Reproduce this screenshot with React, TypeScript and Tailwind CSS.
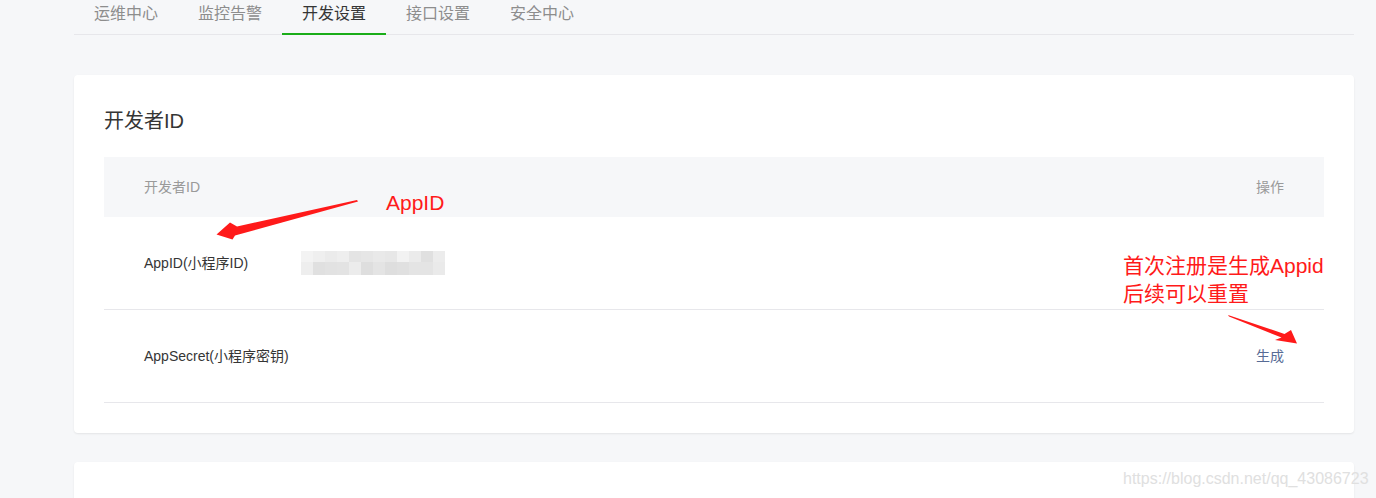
import React from "react";

const FONT = { fontFamily: '"Liberation Sans", "Noto Sans CJK SC", sans-serif' };

const tabs = ["运维中心", "监控告警", "开发设置", "接口设置", "安全中心"];

const blurTop = ["#f3f3f3", "#efefef", "#ebebeb", "#eeeeee", "#e4e4e4", "#e6e6e6", "#e9e9e9", "#e7e7e7", "#f2f2f2", "#ebebeb", "#e0e0e0", "#ececec"];
const blurBottom = ["#eeeeee", "#e0e0e0", "#e2e2e2", "#e3e3e3", "#ececec", "#dedede", "#e4e4e4", "#dedede", "#e0e0e0", "#e4e4e4", "#e4e4e4", "#eaeaea"];

function Blur() {
  return (
    <div className="flex flex-col">
      <div className="flex">
        {blurTop.map((c, i) => (
          <div key={i} className="w-[12px] h-[11px]" style={{ background: c }} />
        ))}
      </div>
      <div className="flex">
        {blurBottom.map((c, i) => (
          <div key={i} className="w-[12px] h-[13px]" style={{ background: c }} />
        ))}
      </div>
    </div>
  );
}

export default function App() {
  return (
    <div className="relative w-[1376px] h-[498px] overflow-hidden bg-[#f6f7f9]" style={FONT}>
      <div className="ml-[74px] w-[1280px]">
        <nav className="flex border-b border-[#e7e7eb]">
          {tabs.map((t, i) => (
            <div
              key={t}
              className={
                i === 2
                  ? "h-[35px] -mb-px px-5 pt-[3px] text-base leading-[22px] text-[#353535] border-b-2 border-[#1aad19]"
                  : "h-[35px] -mb-px px-5 pt-[3px] text-base leading-[22px] text-[#8d8d8d]"
              }
            >
              {t}
            </div>
          ))}
        </nav>

        <section className="mt-10 bg-white rounded-[4px] shadow-[0_1px_2px_rgba(0,0,0,0.08)] px-[30px] pt-[30px] pb-[30px]">
          <h2 className="text-[20px] leading-[32px] text-[#353535] mb-5">开发者ID</h2>
          <div className="text-sm">
            <div className="flex items-center justify-between h-[60px] bg-[#f6f7f9] px-10 text-[#9a9a9a]">
              <span>开发者ID</span>
              <span>操作</span>
            </div>
            <div className="flex items-center h-[93px] border-b border-[#e7e7eb] px-10 text-[#353535]">
              <span className="w-[157px]">AppID(小程序ID)</span>
              <Blur />
            </div>
            <div className="flex items-center justify-between h-[93px] border-b border-[#e7e7eb] px-10 text-[#353535]">
              <span>AppSecret(小程序密钥)</span>
              <span className="text-[#576b95]">生成</span>
            </div>
          </div>
        </section>

        <section className="mt-[29px] h-[60px] bg-white rounded-[4px] shadow-[0_1px_2px_rgba(0,0,0,0.08)]" />
      </div>

      {/* annotations */}
      <svg className="absolute left-0 top-0" width="1376" height="498" viewBox="0 0 1376 498">
        <polygon
          points="357,200 237,226.5 230,222.5 216.5,234.5 232.5,239.5 235,235.5 358,201.5"
          fill="#ff1a1a"
        />
        <polygon
          points="1228,315 1284.5,334 1291,330 1297,343.5 1275,340 1281.5,337.5 1229,316.5"
          fill="#ff1a1a"
        />
      </svg>
      <div className="absolute left-[386px] top-[189px] text-[21px] leading-[28px] text-[#ff1a1a]">AppID</div>
      <div className="absolute left-[1123px] top-[252px] text-[21px] leading-[28px] text-[#ff1a1a]">
        <div>首次注册是生成Appid</div>
        <div>后续可以重置</div>
      </div>
      <div className="absolute left-[1123px] top-[469px] text-base leading-[20px] text-[#e0e0e0]">
        https://blog.csdn.net/qq_43086723
      </div>
    </div>
  );
}
